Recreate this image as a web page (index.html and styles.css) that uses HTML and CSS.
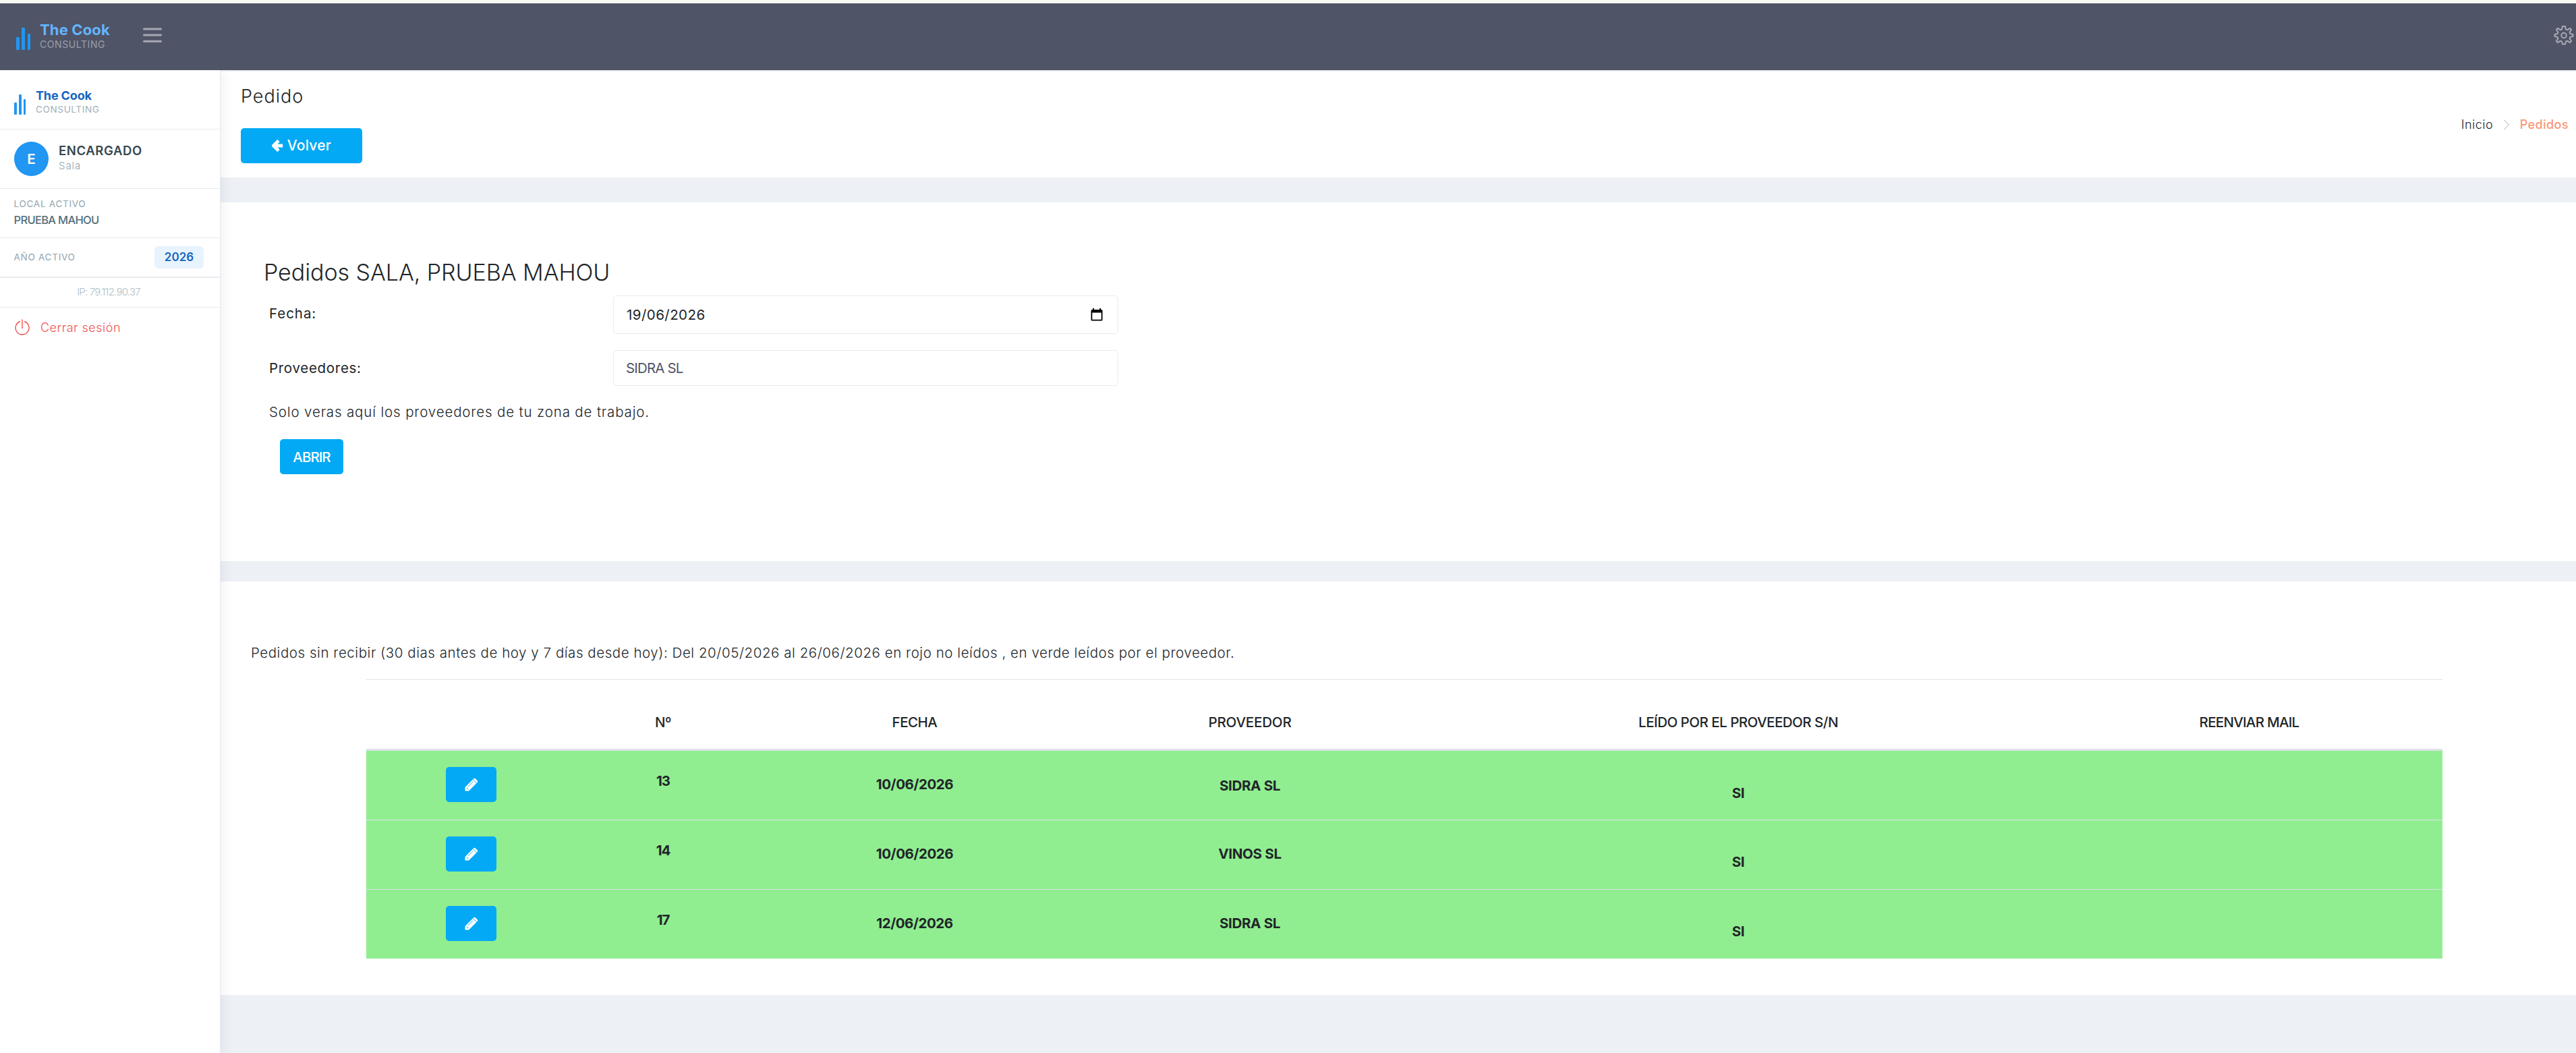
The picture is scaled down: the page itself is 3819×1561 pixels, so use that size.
FILE: index.html
```
<!DOCTYPE html>
<html lang="es">
<head>
    <meta charset="UTF-8">
    <meta name="viewport" content="width=device-width, initial-scale=1.0">
    <title>Pedidos</title>
    <link rel="stylesheet" href="styles.css">
</head>
<body>
    <header class="topbar">
        <div class="brand">
            <svg class="brand-bars" width="21" height="33" viewBox="0 0 21 33">
                <rect x="0" y="14" width="5" height="19" rx="1"/>
                <rect x="8" y="0" width="5" height="33" rx="1"/>
                <rect x="17" y="9" width="4" height="24" rx="1"/>
            </svg>
            <div>
                <div class="brand-name">The Cook</div>
                <div class="brand-sub">CONSULTING</div>
            </div>
        </div>
        <svg class="menu-icon" width="28" height="24" viewBox="0 0 28 24">
            <path d="M1.5 3h25M1.5 12h25M1.5 21.300h25"/>
        </svg>
        <svg class="gear-icon" width="30" height="30" viewBox="0 0 30 30">
            <path d="M13 2h4l1 4.500 2.200.900L24 4.900 26.100 7l-2.500 3.800.900 2.200L28.500 14v3l-4 .9-.9 2.200 2.500 3.900-2.100 2.100-3.800-2.500-2.200.900-1 4h-4l-1-4-2.200-.9L6 26.100 3.900 24l2.500-3.900-.9-2.200-4-.9v-3l4-1 .9-2.200L3.900 7 6 4.900l3.800 2.500L12 6.500z"/>
            <circle cx="15" cy="15.500" r="3.700"/>
        </svg>
    </header>

    <div class="wrapper">
        <aside class="sidebar">
            <div class="side-brand">
                <svg class="brand-bars" width="17" height="30" viewBox="0 0 17 30">
                    <rect x="0" y="12" width="4" height="18" rx="1"/>
                    <rect x="7" y="0" width="4" height="30" rx="1"/>
                    <rect x="14" y="7" width="3" height="23" rx="1"/>
                </svg>
                <div>
                    <div class="brand-name">The Cook</div>
                    <div class="brand-sub">CONSULTING</div>
                </div>
            </div>
            <div class="side-user">
                <div class="avatar">E</div>
                <div>
                    <div class="user-name">ENCARGADO</div>
                    <div class="user-role">Sala</div>
                </div>
            </div>
            <div class="side-local">
                <div class="side-label">LOCAL ACTIVO</div>
                <div class="local-name">PRUEBA MAHOU</div>
            </div>
            <div class="side-year">
                <span class="side-label">AÑO ACTIVO</span>
                <span class="badge">2026</span>
            </div>
            <div class="side-ip">IP: 79.112.90.37</div>
            <a class="logout" href="#">
                <svg width="22" height="24" viewBox="0 0 22 24">
                    <path d="M8 3.500a10 10 0 1 0 6 0M11 .5v13.500"/>
                </svg>
                <span>Cerrar sesión</span>
            </a>
        </aside>

        <main class="page">
            <div class="page-head">
                <div>
                    <h3>Pedido</h3>
                    <a class="btn btn-back" href="#">
                        <svg width="18" height="20" viewBox="0 0 18 20">
                            <path d="M10 2.500 2.500 10l7.500 7.500M3 10h13.200"/>
                        </svg>
                        <span>Volver</span>
                    </a>
                </div>
                <nav class="breadcrumb">
                    <a href="#">Inicio</a>
                    <svg width="10" height="16" viewBox="0 0 10 16"><path d="M1 .7 8.500 8 1 15.300"/></svg>
                    <span class="current">Pedidos</span>
                </nav>
            </div>

            <section class="card form-card">
                <h2>Pedidos SALA, PRUEBA MAHOU</h2>
                <div class="form-row">
                    <label class="fecha-label">Fecha:</label>
                    <div class="field date-field">
                        <span>19/06/2026</span>
                        <svg width="18" height="19" viewBox="0 0 18 19">
                            <path d="M3 0h2v2h8V0h2v2h1q1.500 0 1.500 1.500v13.500q0 1.500-1.500 1.500H2Q.5 18.500.5 17V3.500Q.5 2 2 2h1zM2.300 6.500v10.200h13.400V6.500z" fill-rule="evenodd"/>
                        </svg>
                    </div>
                </div>
                <div class="form-row">
                    <label class="prov-label">Proveedores:</label>
                    <div class="field select-field">SIDRA SL</div>
                </div>
                <p class="note">Solo veras aquí los proveedores de tu zona de trabajo.</p>
                <button class="btn btn-open">ABRIR</button>
            </section>

            <section class="card list-card">
                <p class="caption">Pedidos sin recibir (30 dias antes de hoy y 7 días desde hoy): Del 20/05/2026 al 26/06/2026 en rojo no leídos , en verde leídos por el proveedor.</p>
                <table>
                    <colgroup>
                        <col class="col-edit"><col class="col-num"><col class="col-date"><col class="col-prov"><col class="col-read"><col class="col-mail">
                    </colgroup>
                    <thead>
                        <tr>
                            <th></th>
                            <th>Nº</th>
                            <th>FECHA</th>
                            <th class="th-prov">PROVEEDOR</th>
                            <th>LEÍDO POR EL PROVEEDOR S/N</th>
                            <th class="th-mail">REENVIAR MAIL</th>
                        </tr>
                    </thead>
                    <tbody>
                        <tr>
                            <td class="edit"><button class="btn btn-edit"><svg width="20" height="20" viewBox="0 0 20 20"><path class="body" d="M.5 19.500V14L12.500 2l5.500 5.500-12 12z"/><path class="body" d="M13 1.500q1.500-1.500 3 0L18.700 4.200q1.300 1.300 0 2.600l-.7.7L12.500 2z"/><path class="line" d="M12.300 2.800l5 5M4.800 13 12 5.800M3 14.500l.8 1.800 1.700.7"/></svg></button></td>
                            <td class="num">13</td>
                            <td class="date">10/06/2026</td>
                            <td class="prov">SIDRA SL</td>
                            <td class="read">SI</td>
                            <td></td>
                        </tr>
                        <tr>
                            <td class="edit"><button class="btn btn-edit"><svg width="20" height="20" viewBox="0 0 20 20"><path class="body" d="M.5 19.500V14L12.500 2l5.500 5.500-12 12z"/><path class="body" d="M13 1.500q1.500-1.500 3 0L18.700 4.200q1.300 1.300 0 2.600l-.7.7L12.500 2z"/><path class="line" d="M12.300 2.800l5 5M4.800 13 12 5.800M3 14.500l.8 1.800 1.700.7"/></svg></button></td>
                            <td class="num">14</td>
                            <td class="date">10/06/2026</td>
                            <td class="prov">VINOS SL</td>
                            <td class="read">SI</td>
                            <td></td>
                        </tr>
                        <tr>
                            <td class="edit"><button class="btn btn-edit"><svg width="20" height="20" viewBox="0 0 20 20"><path class="body" d="M.5 19.500V14L12.500 2l5.500 5.500-12 12z"/><path class="body" d="M13 1.500q1.500-1.500 3 0L18.700 4.200q1.300 1.300 0 2.600l-.7.7L12.500 2z"/><path class="line" d="M12.300 2.800l5 5M4.800 13 12 5.800M3 14.500l.8 1.800 1.700.7"/></svg></button></td>
                            <td class="num">17</td>
                            <td class="date">12/06/2026</td>
                            <td class="prov">SIDRA SL</td>
                            <td class="read">SI</td>
                            <td></td>
                        </tr>
                    </tbody>
                </table>
            </section>
        </main>
    </div>
</body>
</html>
```
FILE: styles.css
```
* {
    box-sizing: border-box;
}
body {
    margin: 0;
    min-height: 1561px;
    display: flex;
    flex-direction: column;
    background-color: #edf0f5;
    color: #212529;
    font-family: Inter, "Open Sans", sans-serif;
    font-size: 20.5px;
    font-weight: 300;
    line-height: 30px;
}
h2, h3, p {
    margin: 0;
    font-weight: 300;
}
a {
    color: inherit;
    text-decoration: none;
}
svg {
    display: block;
    flex: none;
}

/* Top bar */
.topbar {
    height: 104px;
    display: flex;
    align-items: flex-start;
    background-color: #4f5467;
    border-top: 5px solid #f8fbf1;
    box-shadow: inset 0 1px 0 #484d60;
    padding: 0 3px 0 24px;
}
.brand {
    display: flex;
    padding-top: 24px;
    width: 188px;
}
.brand-bars {
    fill: #2196f3;
    margin: 12px 14px 0 0;
}
.brand-name {
    color: #64b5ff;
    font-size: 22px;
    font-weight: 700;
    line-height: 30px;
    letter-spacing: 0.15px;
    white-space: nowrap;
}
.brand-sub {
    color: #9a9eaa;
    font-size: 14px;
    font-weight: 400;
    line-height: 14px;
    letter-spacing: 0.58px;
}
.menu-icon {
    margin-top: 35px;
    fill: none;
    stroke: #a7a9b3;
    stroke-width: 3;
    stroke-linecap: round;
}
.gear-icon {
    margin: 31.5px 0 0 auto;
    fill: none;
    stroke: #a7a9b3;
    stroke-width: 2;
    stroke-linejoin: round;
}

/* Sidebar */
.wrapper {
    display: flex;
    flex: 1;
}
.sidebar {
    position: relative;
    z-index: 1;
    flex: none;
    width: 327px;
    background-color: #fff;
    border-right: 1px solid #e6e9f0;
    box-shadow: 1px 0 20px rgba(0, 0, 0, 0.08);
    clip-path: inset(0 -30px 0 0);
}
.side-brand {
    display: flex;
    height: 88px;
    padding: 27px 0 0 21px;
    border-bottom: 1px solid #e8eaee;
}
.side-brand .brand-bars {
    margin: 9px 15px 0 0;
}
.side-brand .brand-name {
    color: #1565c0;
    font-size: 18px;
    line-height: 21px;
    letter-spacing: -0.15px;
}
.side-brand .brand-sub {
    color: #9fb0b9;
    font-size: 13.5px;
    line-height: 20px;
    letter-spacing: 0.66px;
}
.side-user {
    display: flex;
    height: 88px;
    padding: 18px 0 0 21px;
    border-bottom: 1px solid #e8eaee;
}
.avatar {
    width: 51px;
    height: 51px;
    margin-right: 15px;
    border-radius: 50%;
    background-color: #2196f3;
    color: #fff;
    font-weight: 600;
    line-height: 51px;
    text-align: center;
}
.user-name {
    color: #37474f;
    font-size: 18.5px;
    font-weight: 600;
    line-height: 26px;
    letter-spacing: 0.6px;
}
.user-role {
    color: #90a4ae;
    font-size: 15px;
    line-height: 20px;
    letter-spacing: 0.9px;
}
.side-local {
    height: 73px;
    padding: 12px 0 0 20.5px;
    border-bottom: 1px solid #e8eaee;
}
.side-label {
    color: #90a4ae;
    font-size: 13.5px;
    font-weight: 400;
    line-height: 20px;
    letter-spacing: 0.73px;
}
.local-name {
    margin-top: 2px;
    color: #546e7a;
    font-size: 16.5px;
    font-weight: 500;
    line-height: 25px;
    letter-spacing: -0.69px;
}
.side-year {
    display: flex;
    justify-content: space-between;
    align-items: center;
    height: 59px;
    padding: 0 24px 1px 20.5px;
    border-bottom: 2px solid #e6ebf0;
}
.badge {
    width: 73px;
    height: 33px;
    border-radius: 6px;
    background-color: #e7f3fe;
    color: #1565c0;
    font-size: 17px;
    font-weight: 600;
    line-height: 33px;
    text-align: center;
}
.side-ip {
    height: 44px;
    padding-right: 4px;
    border-bottom: 1px solid #e8eaee;
    color: #b0bec5;
    font-size: 15px;
    line-height: 42px;
    letter-spacing: -0.77px;
    text-align: center;
}
.logout {
    display: flex;
    align-items: flex-start;
    padding: 17px 0 0 22px;
    color: #ef5350;
    font-size: 18px;
    line-height: 24px;
    letter-spacing: 0.5px;
}
.logout svg {
    margin-right: 16px;
    fill: none;
    stroke: #ef5350;
    stroke-width: 1.4;
}
.logout span {
    margin-top: 1px;
}

/* Page */
.page {
    flex: 1;
    min-width: 0;
    padding-top: 2px;
}
.page-head {
    display: flex;
    justify-content: space-between;
    height: 157px;
    padding: 20px 11px 0 30px;
    background-color: #fff;
}
h3 {
    font-size: 27px;
    line-height: 34px;
    letter-spacing: 1px;
}
.btn {
    display: flex;
    align-items: center;
    justify-content: center;
    height: 52px;
    padding: 0;
    border: none;
    border-radius: 5px;
    background-color: #03a9f4;
    color: #fff;
    font-family: inherit;
    font-size: 20.5px;
    font-weight: 500;
    cursor: pointer;
}
.btn-back {
    width: 180px;
    margin-top: 30px;
    font-size: 21px;
    letter-spacing: 0.23px;
}
.btn-back svg {
    margin-right: 5px;
    fill: none;
    stroke: #fff;
    stroke-width: 4.8;
}
.breadcrumb {
    display: flex;
    align-items: center;
    height: 30px;
    margin-top: 44px;
    font-size: 18px;
    letter-spacing: 0.5px;
}
.breadcrumb svg {
    margin: 0 14.5px 0 15px;
    fill: none;
    stroke: #ccd5db;
    stroke-width: 1.5;
}
.current {
    color: #fb9678;
    font-weight: 500;
    letter-spacing: 0.43px;
}
.card {
    background-color: #fff;
}
.form-card {
    height: 532px;
    margin-top: 37px;
    padding: 84px 0 0 64px;
}
h2 {
    margin-bottom: 14px;
    font-size: 34px;
    line-height: 40px;
    letter-spacing: -0.06px;
}
.form-row {
    display: flex;
    align-items: flex-start;
    margin-bottom: 24px;
    padding-left: 8px;
}
.form-row label {
    width: 510px;
    padding-top: 12px;
    font-weight: 400;
}
.fecha-label {
    letter-spacing: 0.95px;
}
.prov-label {
    letter-spacing: 0.7px;
}
.field {
    display: flex;
    align-items: center;
    justify-content: space-between;
    width: 749px;
    padding: 0 22px 0 19px;
    border: 1px solid #e9ecef;
    border-radius: 5px;
    font-weight: 400;
}
.date-field {
    height: 57px;
    letter-spacing: 0.45px;
}
.select-field {
    height: 53px;
    padding-left: 18px;
    color: #4f5467;
    letter-spacing: -0.85px;
}
.note {
    padding-left: 8px;
    letter-spacing: 0.85px;
}
.btn-open {
    width: 94px;
    margin: 25px 0 0 24px;
    letter-spacing: -0.97px;
}

/* Orders table */
.list-card {
    height: 613px;
    margin-top: 30px;
    padding: 91px 198px 0 45px;
}
.caption {
    margin-bottom: 24px;
    letter-spacing: 0.545px;
    white-space: nowrap;
}
table {
    width: 3078px;
    margin-left: 171px;
    table-layout: fixed;
    border-spacing: 0;
    text-align: center;
}
.col-edit { width: 311px; }
.col-num { width: 258px; }
.col-date { width: 488px; }
.col-prov { width: 506px; }
.col-read { width: 942px; }
.col-mail { width: 573px; }
th {
    height: 106px;
    padding: 23px 0 0;
    border-top: 1px solid #dee2e6;
    border-bottom: 3px solid #dee2e6;
    font-weight: 500;
    letter-spacing: -0.5px;
}
.th-prov {
    letter-spacing: -0.15px;
}
.th-mail {
    letter-spacing: -0.73px;
}
td {
    height: 103px;
    padding: 0;
    border-top: 1px solid #dee2e6;
    background-color: #90ee90;
    font-weight: 700;
    vertical-align: top;
}
tbody tr:first-child td {
    height: 102px;
    border-top: none;
}
td.edit {
    padding-top: 24px;
}
td.num {
    padding-top: 30px;
    letter-spacing: -1.1px;
}
td.date {
    padding-top: 35px;
    letter-spacing: -0.43px;
}
td.prov {
    padding-top: 35px;
    letter-spacing: -0.3px;
}
td.read {
    padding-top: 47px;
    letter-spacing: -0.4px;
}
tbody tr:first-child td.prov {
    padding-top: 37px;
}
tbody tr:first-child td.read {
    padding-top: 48px;
}
.btn-edit {
    width: 75px;
    margin: 0 auto;
}
.btn-edit .body {
    fill: #fff;
}
.btn-edit .line {
    fill: none;
    stroke: #03a9f4;
    stroke-width: 0.9;
}
```
